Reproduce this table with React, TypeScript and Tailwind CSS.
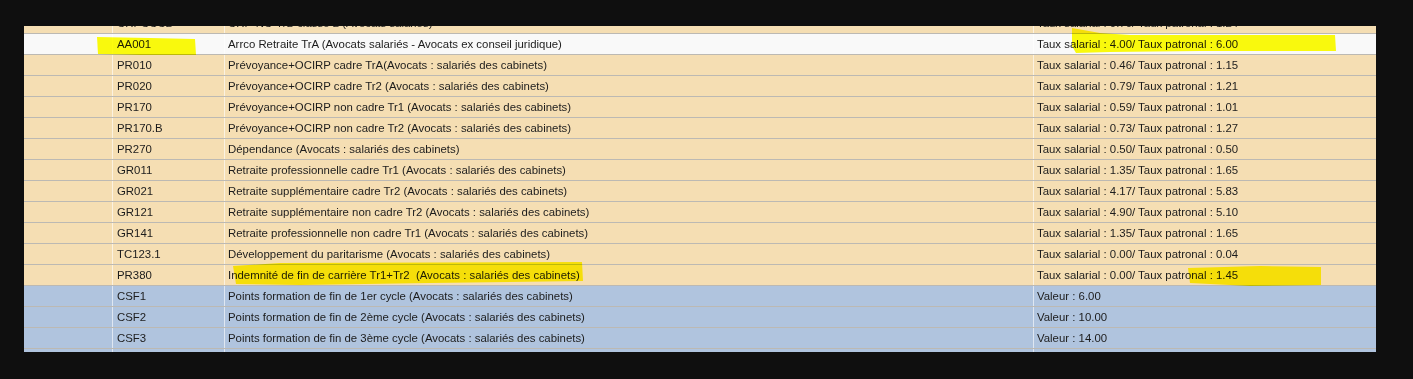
import React from 'react';

type Row = {
  code: string;
  label: string;
  value: string;
  tone: 'wheat' | 'white' | 'blue';
};

const rows: Row[] = [
  { code: 'CRPCCC2', label: 'CRP-NC-TrB classe 2 (Avocats salariés)', value: 'Taux salarial : 0.70/ Taux patronal : 1.24', tone: 'wheat' },
  { code: 'AA001', label: 'Arrco Retraite TrA (Avocats salariés - Avocats ex conseil juridique)', value: 'Taux salarial : 4.00/ Taux patronal : 6.00', tone: 'white' },
  { code: 'PR010', label: 'Prévoyance+OCIRP cadre TrA(Avocats : salariés des cabinets)', value: 'Taux salarial : 0.46/ Taux patronal : 1.15', tone: 'wheat' },
  { code: 'PR020', label: 'Prévoyance+OCIRP cadre Tr2 (Avocats : salariés des cabinets)', value: 'Taux salarial : 0.79/ Taux patronal : 1.21', tone: 'wheat' },
  { code: 'PR170', label: 'Prévoyance+OCIRP non cadre Tr1 (Avocats : salariés des cabinets)', value: 'Taux salarial : 0.59/ Taux patronal : 1.01', tone: 'wheat' },
  { code: 'PR170.B', label: 'Prévoyance+OCIRP non cadre Tr2 (Avocats : salariés des cabinets)', value: 'Taux salarial : 0.73/ Taux patronal : 1.27', tone: 'wheat' },
  { code: 'PR270', label: 'Dépendance (Avocats : salariés des cabinets)', value: 'Taux salarial : 0.50/ Taux patronal : 0.50', tone: 'wheat' },
  { code: 'GR011', label: 'Retraite professionnelle cadre Tr1 (Avocats : salariés des cabinets)', value: 'Taux salarial : 1.35/ Taux patronal : 1.65', tone: 'wheat' },
  { code: 'GR021', label: 'Retraite supplémentaire cadre Tr2 (Avocats : salariés des cabinets)', value: 'Taux salarial : 4.17/ Taux patronal : 5.83', tone: 'wheat' },
  { code: 'GR121', label: 'Retraite supplémentaire non cadre Tr2 (Avocats : salariés des cabinets)', value: 'Taux salarial : 4.90/ Taux patronal : 5.10', tone: 'wheat' },
  { code: 'GR141', label: 'Retraite professionnelle non cadre Tr1 (Avocats : salariés des cabinets)', value: 'Taux salarial : 1.35/ Taux patronal : 1.65', tone: 'wheat' },
  { code: 'TC123.1', label: 'Développement du paritarisme (Avocats : salariés des cabinets)', value: 'Taux salarial : 0.00/ Taux patronal : 0.04', tone: 'wheat' },
  { code: 'PR380', label: 'Indemnité de fin de carrière Tr1+Tr2\u00a0 (Avocats : salariés des cabinets)', value: 'Taux salarial : 0.00/ Taux patronal : 1.45', tone: 'wheat' },
  { code: 'CSF1', label: 'Points formation de fin de 1er cycle (Avocats : salariés des cabinets)', value: 'Valeur : 6.00', tone: 'blue' },
  { code: 'CSF2', label: 'Points formation de fin de 2ème cycle (Avocats : salariés des cabinets)', value: 'Valeur : 10.00', tone: 'blue' },
  { code: 'CSF3', label: 'Points formation de fin de 3ème cycle (Avocats : salariés des cabinets)', value: 'Valeur : 14.00', tone: 'blue' },
  { code: 'CSF4', label: 'Points formation de fin de 4ème cycle (Avocats : salariés des cabinets)', value: 'Valeur : 18.00', tone: 'blue' },
];

const toneClass = {
  wheat: 'bg-[#f5deb3]',
  white: 'bg-[#f9f9f9]',
  blue: 'bg-[#b0c4de]',
};

function TableRow({ row, first }: { row: Row; first: boolean }) {
  return (
    <div
      className={`flex h-[21px] shrink-0 border-b border-[#bcb9b3] ${toneClass[row.tone]} ${first ? '-mt-[13px]' : ''}`}
    >
      <div className="w-[89px] shrink-0 border-r border-white/60" />
      <div className="w-[112px] shrink-0 border-r border-white/60 pl-[4px] pt-px flex items-center whitespace-nowrap">
        {row.code}
      </div>
      <div className="w-[809px] shrink-0 border-r border-white/60 pl-[3px] pt-px flex items-center whitespace-nowrap">
        {row.label}
      </div>
      <div className="flex-1 pl-[3px] pt-px flex items-center whitespace-nowrap">{row.value}</div>
    </div>
  );
}

export default function App() {
  return (
    <div className="relative w-[1413px] h-[379px] bg-[#0f0f0f] pt-[26px] pl-[24px] overflow-hidden">
      <div
        className="w-[1352px] h-[326px] overflow-hidden flex flex-col text-[11.4px] text-[#1c1c1c]"
        style={{ fontFamily: '"Liberation Sans", Arial, sans-serif' }}
      >
        {rows.map((row, i) => (
          <TableRow key={row.code} row={row} first={i === 0} />
        ))}
      </div>

      {/* marker highlights drawn over the grid */}
      <svg
        className="absolute inset-0 pointer-events-none mix-blend-multiply"
        width={1413}
        height={379}
        viewBox="0 0 1413 379"
      >
        <g fill="#ffff00" opacity={0.95}>
          <polygon points="97,37 150,38 195,39 196,55 140,55 98,54" />
          <polygon points="1072,28 1100,33 1130,35 1335,35 1336,51 1200,51 1110,52 1076,53 1072,46" />
          <polygon points="233,266 280,263 582,262 583,281 430,283 300,285 236,284" />
          <polygon points="1188,268 1260,266 1321,267 1321,285 1250,286 1190,283" />
        </g>
      </svg>
    </div>
  );
}
